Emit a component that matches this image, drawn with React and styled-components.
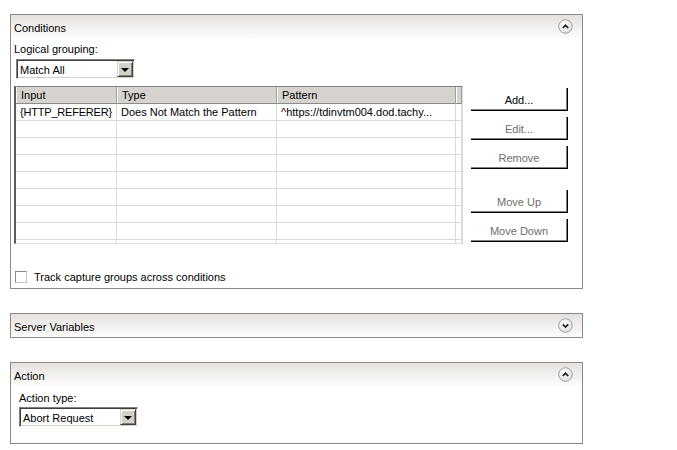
import React from "react";
import styled, { createGlobalStyle } from "styled-components";

const GlobalStyle = createGlobalStyle`
  body {
    margin: 0;
    background: #fff;
    font-family: "Liberation Sans", Arial, sans-serif;
    font-size: 11px;
    color: #000;
  }
`;

const Page = styled.div`
  display: flex;
  flex-direction: column;
  gap: 24px;
  width: 573px;
  padding: 14px 0 0 10px;
`;

const Panel = styled.section`
  box-sizing: border-box;
  width: 573px;
  border: 1px solid #8a8a8a;
`;

const Header = styled.div`
  display: flex;
  align-items: center;
  justify-content: space-between;
  height: 23px;
  padding: 0 9px 0 3px;
  background: linear-gradient(to bottom, #e4e0dd 0%, #f3f1ef 55%, #fdfcfc 100%);
`;

const Title = styled.span`
  line-height: 14px;
  padding-top: 2px;
`;

const Body = styled.div`
  display: flex;
  flex-direction: column;
  align-items: flex-start;
  padding: ${({ $pad }) => $pad};
`;

const Label = styled.div`
  line-height: 14px;
`;

const Select = styled.div`
  box-sizing: border-box;
  display: flex;
  align-items: center;
  justify-content: space-between;
  width: 119px;
  height: 20px;
  margin-top: ${({ $top }) => $top}px;
  margin-left: ${({ $left }) => $left || 0}px;
  background: #fff;
  border: 1px solid;
  border-color: #808080 #ffffff #ffffff #808080;
  box-shadow: inset 1px 1px 0 #404040, inset -1px -1px 0 #d4d0c8;
  padding: 1px;
`;

const SelectText = styled.span`
  padding: 1px 0 0 2px;
  line-height: 14px;
`;

const Arrow = styled.span`
  box-sizing: border-box;
  display: flex;
  align-items: center;
  justify-content: center;
  width: 16px;
  height: 16px;
  background: #d4d0c8;
  border: 1px solid;
  border-color: #d4d0c8 #404040 #404040 #d4d0c8;
  box-shadow: inset 1px 1px 0 #fff, inset -1px -1px 0 #808080;

  &::after {
    content: "";
    border-left: 4px solid transparent;
    border-right: 4px solid transparent;
    border-top: 4px solid #000;
    margin-top: 1px;
  }
`;

const GridRow = styled.div`
  display: flex;
  align-items: flex-start;
  gap: 8px;
  margin-top: 7px;
`;

const Table = styled.div`
  box-sizing: border-box;
  width: 449px;
  height: 158px;
  overflow: hidden;
  border-top: 1px solid #808080;
  border-left: 2px solid #5c5c5c;
  border-right: 1px solid #dcdcdc;
  border-bottom: 1px solid #dcdcdc;
`;

const Line = styled.div`
  display: grid;
  grid-template-columns: 101px 160px 179px 6px;
  height: 17px;
`;

const HeadCell = styled.div`
  box-sizing: border-box;
  background: #d6d3ce;
  border-right: 1px solid #a0a0a0;
  border-bottom: 1px solid #8c8c8c;
  box-shadow: inset 1px 0 0 #fff;
  padding-left: 5px;
  line-height: 16px;
  white-space: nowrap;
`;

const Cell = styled.div`
  box-sizing: border-box;
  border-right: 1px solid #d9d9d9;
  border-bottom: 1px solid #d9d9d9;
  padding-left: 4px;
  line-height: 16px;
  letter-spacing: ${({ $tight }) => ($tight ? "-0.2px" : "0")};
  white-space: nowrap;
  overflow: hidden;
`;

const Buttons = styled.div`
  display: flex;
  flex-direction: column;
  margin-top: 2px;
`;

const Button = styled.button`
  box-sizing: border-box;
  width: 97px;
  height: 23px;
  margin-top: ${({ $top }) => $top || 0}px;
  padding: 1px 0 0;
  background: #fff;
  border: none;
  border-right: 1px solid #000;
  border-bottom: 1px solid #000;
  box-shadow: inset -1px -1px 0 #808080;
  font-family: inherit;
  font-size: 11px;
  color: ${({ disabled }) => (disabled ? "#6e6e6e" : "#000")};
`;

const CheckRow = styled.label`
  display: flex;
  align-items: center;
  gap: 7px;
  margin-top: 26px;
  margin-left: 1px;
  line-height: 14px;
`;

const Box = styled.span`
  box-sizing: border-box;
  width: 12px;
  height: 12px;
  margin-top: -1px;
  background: #fff;
  border: 1px solid;
  border-color: #8a8a8a #c8c8c8 #c8c8c8 #8a8a8a;
`;

function Chevron({ up }) {
  return (
    <svg width="15" height="15" viewBox="0 0 15 15">
      <defs>
        <radialGradient id={up ? "cu" : "cd"} cx="0.4" cy="0.35" r="0.7">
          <stop offset="0" stopColor="#ffffff" />
          <stop offset="1" stopColor="#dcdcdc" />
        </radialGradient>
      </defs>
      <circle cx="7.5" cy="7.5" r="6.8" fill={`url(#${up ? "cu" : "cd"})`} stroke="#a2a2a2" />
      <path
        d={up ? "M4.8 9 L7.5 6.3 L10.2 9" : "M4.8 6.3 L7.5 9 L10.2 6.3"}
        fill="none"
        stroke="#1e1e1e"
        strokeWidth="1.7"
      />
    </svg>
  );
}

const rows = [
  ["{HTTP_REFERER}", "Does Not Match the Pattern", "^https://tdinvtm004.dod.tachy..."],
  ...Array(8).fill(["", "", ""]),
];

export default function App() {
  return (
    <>
      <GlobalStyle />
      <Page>
        <Panel>
          <Header>
            <Title>Conditions</Title>
            <Chevron up />
          </Header>
          <Body $pad="4px 0 4px 3px">
            <Label>Logical grouping:</Label>
            <Select $top={3} $left={2}>
              <SelectText>Match All</SelectText>
              <Arrow />
            </Select>
            <GridRow>
              <Table>
                <Line>
                  <HeadCell>Input</HeadCell>
                  <HeadCell>Type</HeadCell>
                  <HeadCell>Pattern</HeadCell>
                  <HeadCell />
                </Line>
                {rows.map((r, i) => (
                  <Line key={i}>
                    <Cell $tight>{r[0]}</Cell>
                    <Cell>{r[1]}</Cell>
                    <Cell>{r[2]}</Cell>
                    <Cell />
                  </Line>
                ))}
              </Table>
              <Buttons>
                <Button>Add...</Button>
                <Button disabled $top={6}>Edit...</Button>
                <Button disabled $top={6}>Remove</Button>
                <Button disabled $top={21}>Move Up</Button>
                <Button disabled $top={6}>Move Down</Button>
              </Buttons>
            </GridRow>
            <CheckRow>
              <Box />
              Track capture groups across conditions
            </CheckRow>
          </Body>
        </Panel>
        <Panel>
          <Header>
            <Title>Server Variables</Title>
            <Chevron />
          </Header>
        </Panel>
        <Panel>
          <Header>
            <Title>Action</Title>
            <Chevron up />
          </Header>
          <Body $pad="5px 0 16px 8px">
            <Label>Action type:</Label>
            <Select $top={2}>
              <SelectText>Abort Request</SelectText>
              <Arrow />
            </Select>
          </Body>
        </Panel>
      </Page>
    </>
  );
}
